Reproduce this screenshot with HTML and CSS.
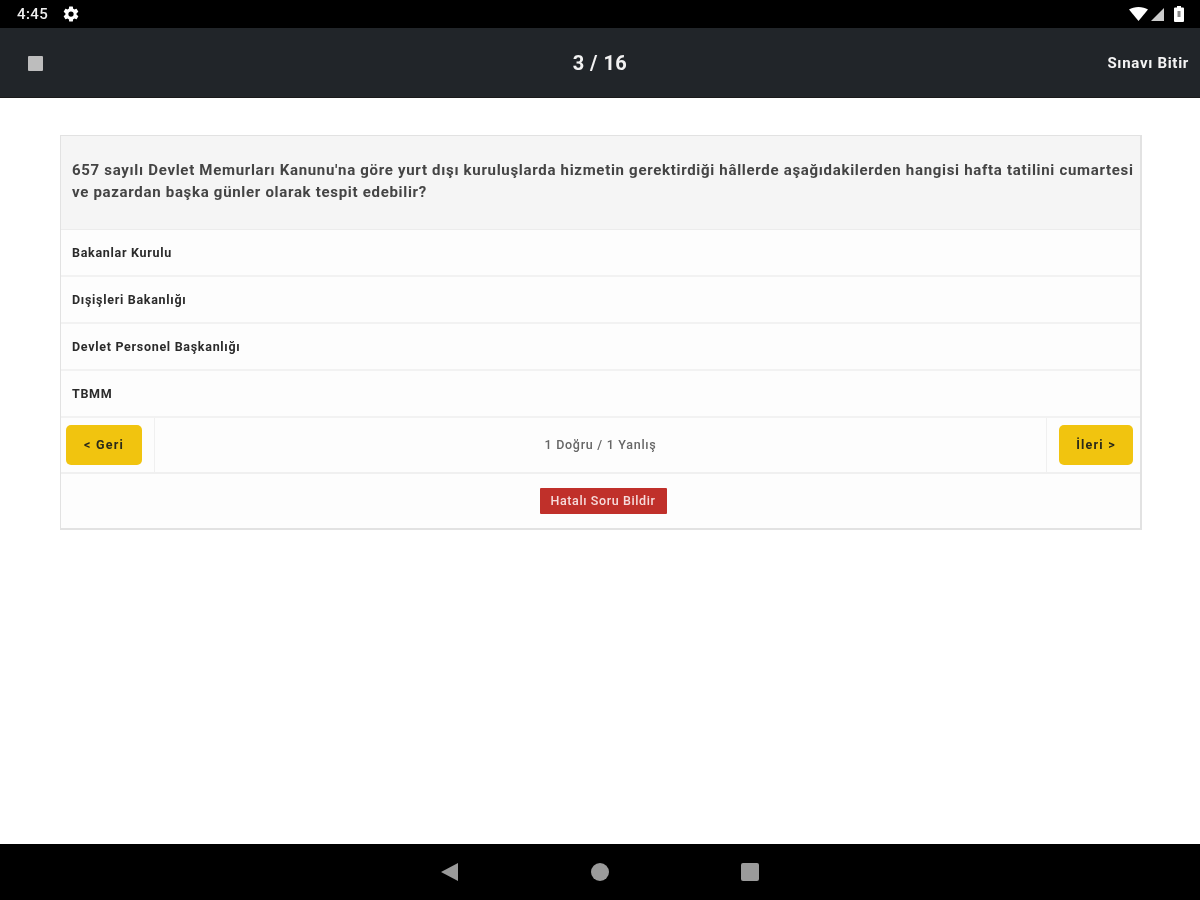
FILE: index.html
```html
<!DOCTYPE html>
<html lang="tr">
<head>
<meta charset="utf-8">
<title>Sınav</title>
<link rel="stylesheet" href="styles.css">
</head>
<body>
<div class="screen">
  <div class="statusbar">
    <div class="status-left">
      <span class="time">4:45</span>
      <svg class="gear" width="18" height="18" viewBox="0 0 24 24"><path fill="#fff" d="M19.4 13c.04-.33.06-.66.06-1s-.02-.67-.06-1l2.1-1.65c.2-.15.25-.42.13-.64l-2-3.46c-.12-.22-.39-.3-.61-.22l-2.49 1c-.52-.4-1.08-.73-1.69-.98l-.38-2.65A.49.49 0 0 0 14 2h-4c-.25 0-.46.18-.49.42l-.38 2.65c-.61.25-1.17.59-1.69.98l-2.49-1c-.23-.09-.49 0-.61.22l-2 3.46c-.13.22-.07.49.12.64L4.56 11c-.04.33-.07.67-.07 1s.03.67.07 1l-2.1 1.65c-.2.15-.25.42-.12.64l2 3.46c.12.22.39.3.61.22l2.49-1c.52.4 1.08.73 1.69.98l.38 2.65c.03.24.24.42.49.42h4c.25 0 .46-.18.49-.42l.38-2.65c.61-.25 1.17-.59 1.69-.98l2.49 1c.23.09.49 0 .61-.22l2-3.46c.12-.22.07-.49-.12-.64L19.4 13zM12 15.5a3.5 3.5 0 1 1 0-7 3.5 3.5 0 0 1 0 7z"/></svg>
    </div>
    <div class="status-right">
      <svg class="wifi" width="19" height="14" viewBox="0 0 19 14"><path fill="#fff" d="M0 2.600C2.500.9 5.900 0 9.500 0s7 .9 9.500 2.600L9.500 14z"/></svg>
      <svg class="signal" width="14" height="13" viewBox="0 0 14 13"><path fill="#fff" opacity=".8" d="M0 13 13 0v13z"/></svg>
      <svg class="battery" width="10" height="16" viewBox="0 0 10 16"><path fill="#fff" d="M3 0h4v1.500h2a1 1 0 0 1 1 1V15a1 1 0 0 1-1 1H1a1 1 0 0 1-1-1V2.500a1 1 0 0 1 1-1h2z"/><path fill="#888" d="M3.500 5h3v6h-3z"/></svg>
    </div>
  </div>
  <header class="appbar">
    <div class="stop"></div>
    <div class="counter">3 / 16</div>
    <div class="finish">Sınavı Bitir</div>
  </header>
  <main class="content">
    <section class="card">
      <div class="question">657 sayılı Devlet Memurları Kanunu'na göre yurt dışı kuruluşlarda hizmetin gerektirdiği hâllerde aşağıdakilerden hangisi hafta tatilini cumartesi ve pazardan başka günler olarak tespit edebilir?</div>
      <div class="option">Bakanlar Kurulu</div>
      <div class="option">Dışişleri Bakanlığı</div>
      <div class="option">Devlet Personel Başkanlığı</div>
      <div class="option">TBMM</div>
      <div class="nav">
        <div class="nav-side nav-left"><button class="yellow yellow-left">&lt; Geri</button></div>
        <div class="score">1 Doğru / 1 Yanlış</div>
        <div class="nav-side nav-right"><button class="yellow yellow-right">İleri &gt;</button></div>
      </div>
      <div class="report-row"><button class="report">Hatalı Soru Bildir</button></div>
    </section>
  </main>
  <footer class="navbar">
    <svg width="20" height="20" viewBox="0 0 20 20"><path fill="#9a9a9a" d="M18 1v18L1 10z"/></svg>
    <svg width="20" height="20" viewBox="0 0 20 20"><circle fill="#9a9a9a" cx="10" cy="10" r="9"/></svg>
    <svg width="20" height="20" viewBox="0 0 20 20"><rect fill="#9a9a9a" x="1" y="1" width="18" height="18" rx="2"/></svg>
  </footer>
</div>
</body>
</html>
```
FILE: styles.css
```css
* { box-sizing: border-box; }
html, body { margin: 0; padding: 0; }
body { font-family: Roboto, "Liberation Sans", sans-serif; background: #fff; }
.screen { width: 1200px; height: 900px; display: flex; flex-direction: column; overflow: hidden; filter: blur(.6px); }
.statusbar { height: 28px; background: #000; display: flex; justify-content: space-between; align-items: center; padding: 0 16px 0 17px; color: #fff; flex: none; }
.status-left { display: flex; align-items: center; gap: 14px; }
.time { font-size: 15px; font-weight: 500; color: #eee; letter-spacing: .4px; }
.gear { margin-top: -1px; }
.status-right { display: flex; align-items: center; }
.wifi { margin-right: 3px; }
.signal { margin-right: 9px; }
.appbar { height: 70px; background: #212529; border-bottom: 1px solid #1a1a1a; display: flex; align-items: center; justify-content: space-between; flex: none; padding: 0 11px 0 28px; position: relative; }
.stop { width: 15px; height: 15px; margin-top: 2px; background: #bdbdbd; border-radius: 1px; }
.counter { position: absolute; left: 0; right: 0; text-align: center; color: #f2f2f2; font-size: 20px; font-weight: 700; letter-spacing: .45px; }
.finish { color: #f4f4f4; font-size: 15px; font-weight: 700; letter-spacing: .7px; }
.content { flex: 1; padding: 37px 58px 0 60px; background: #fff; }
.card { border: 1px solid #e2e2e2; border-width: 1px 2px 2px 1px; background: #fdfdfd; color: #333; }
.question { height: 94px; background: #f5f5f5; padding: 23px 0 0 11px; font-size: 15px; line-height: 22px; font-weight: 700; color: #444; letter-spacing: .695px; border-bottom: 1px solid #ececec; }
.option { height: 47px; padding: 0 11px 1px; display: flex; align-items: center; font-size: 12.500px; font-weight: 700; color: #2b2b2b; letter-spacing: .7px; border-bottom: 2px solid #f2f2f2; }
.nav { height: 56px; display: flex; border-bottom: 2px solid #f0f0f0; }
.nav-side { display: flex; align-items: center; flex: none; }
.nav-left { width: 94px; padding-left: 5px; border-right: 1px solid #f0f0f0; }
.nav-right { width: 94px; padding-left: 12px; border-left: 1px solid #f0f0f0; }
.yellow { height: 40px; border: 0; border-radius: 5px; background: #f1c40f; color: #2a2a1a; font: 700 12.500px Roboto, sans-serif; letter-spacing: 1.2px; padding: 0 0 2px; }
.yellow-left { width: 76px; }
.yellow-right { width: 74px; }
.score { flex: 1; display: flex; align-items: center; justify-content: center; padding-bottom: 2px; font-size: 12.500px; font-weight: 500; color: #666; letter-spacing: .72px; }
.report-row { height: 54px; display: flex; align-items: center; justify-content: center; padding-left: 5px; }
.report { width: 127px; height: 26px; border: 0; border-radius: 1px; background: #c0302a; color: #f6dcdc; font: 500 12.500px Roboto, sans-serif; letter-spacing: .6px; padding: 0 0 2px; }
.navbar { height: 56px; background: #000; display: flex; align-items: center; justify-content: center; gap: 130px; flex: none; }
```
